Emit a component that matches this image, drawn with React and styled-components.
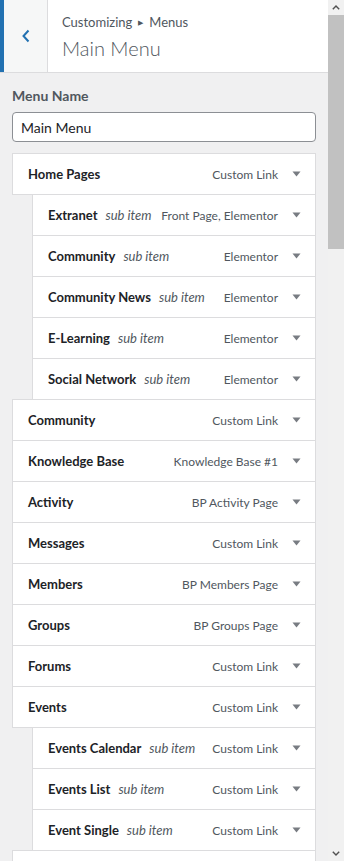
import React from "react";
import styled, { createGlobalStyle } from "styled-components";

const Global = createGlobalStyle`
  html, body { margin: 0; padding: 0; }
  body {
    font-family: Lato, "Noto Sans", "Liberation Sans", sans-serif;
    background: #f0f0f1;
    color: #1d2327;
  }
`;

const Shell = styled.div`
  display: flex;
  width: 344px;
  height: 861px;
  overflow: hidden;
`;

const Panel = styled.div`
  width: 328px;
  flex: none;
  display: flex;
  flex-direction: column;
  background: #f0f0f1;
  overflow: hidden;
`;

const Header = styled.div`
  display: flex;
  height: 72px;
  flex: none;
  background: #fff;
  border-bottom: 1px solid #dcdcde;
`;

const BackButton = styled.div`
  width: 43px;
  flex: none;
  display: flex;
  align-items: center;
  justify-content: center;
  background: #f6f7f7;
  border-left: 4px solid #2271b1;
  border-right: 1px solid #dcdcde;
  color: #2271b1;
`;

const Titles = styled.div`
  display: flex;
  flex-direction: column;
  padding: 12px 0 0 14px;
`;

const Crumb = styled.div`
  font-size: 13px;
  line-height: 20px;
  color: #50575e;
  display: flex;
  align-items: center;
  gap: 6px;
`;

const CrumbArrow = styled.span`
  font-size: 7px;
  color: #50575e;
`;

const Title = styled.div`
  font-size: 20px;
  font-weight: 300;
  line-height: 28px;
  color: #50575e;
  margin-top: 2px;
`;

const Body = styled.div`
  padding: 13px 12px 0 12px;
  display: flex;
  flex-direction: column;
`;

const Label = styled.div`
  font-size: 14px;
  font-weight: 700;
  line-height: 20px;
  color: #50575e;
`;

const NameInput = styled.div`
  margin-top: 6px;
  height: 28px;
  border: 1px solid #8c8f94;
  border-radius: 4px;
  background: #fff;
  display: flex;
  align-items: center;
  padding: 0 8px;
  font-size: 14px;
  color: #1d2327;
`;

const List = styled.div`
  margin-top: 11px;
  display: flex;
  flex-direction: column;
`;

const Item = styled.div`
  margin-left: ${(p) => (p.$depth ? 20 : 0)}px;
  margin-top: -1px;
  height: 40px;
  flex: none;
  background: #fff;
  border: 1px solid #dcdcde;
  display: flex;
  align-items: center;
  padding-left: 15px;
  &:first-child { margin-top: 0; }
`;

const ItemTitle = styled.span`
  font-size: 13px;
  font-weight: 700;
  color: #1d2327;
  white-space: nowrap;
`;

const SubTag = styled.span`
  font-size: 13px;
  font-style: italic;
  color: #50575e;
  margin-left: 8px;
  white-space: nowrap;
`;

const ItemType = styled.span`
  margin-left: auto;
  padding-left: 8px;
  font-size: 12px;
  color: #50575e;
  white-space: nowrap;
`;

const Toggle = styled.span`
  width: 37px;
  flex: none;
  display: flex;
  align-items: center;
  justify-content: center;
  color: #787c82;
`;

const Scrollbar = styled.div`
  width: 16px;
  flex: none;
  display: flex;
  flex-direction: column;
  background: #f1f1f1;
`;

const ScrollButton = styled.div`
  height: 15px;
  flex: none;
  display: flex;
  align-items: center;
  justify-content: center;
  color: #505050;
`;

const Track = styled.div`
  flex: 1;
  display: flex;
  flex-direction: column;
`;

const Thumb = styled.div`
  height: 234px;
  background: #c1c1c1;
`;

const Arrow = () => (
  <svg width="9" height="6" viewBox="0 0 9 6">
    <polygon points="0.5,0.5 8.5,0.5 4.5,5.5" fill="currentColor" />
  </svg>
);

const Chevron = ({ up }) => (
  <svg width="8" height="5" viewBox="0 0 8 5" style={up ? undefined : { transform: "rotate(180deg)" }}>
    <polyline points="0.8,4.2 4,1 7.2,4.2" fill="none" stroke="currentColor" strokeWidth="1.4" />
  </svg>
);

const items = [
  { title: "Home Pages", type: "Custom Link" },
  { title: "Extranet", type: "Front Page, Elementor", sub: true },
  { title: "Community", type: "Elementor", sub: true },
  { title: "Community News", type: "Elementor", sub: true },
  { title: "E-Learning", type: "Elementor", sub: true },
  { title: "Social Network", type: "Elementor", sub: true },
  { title: "Community", type: "Custom Link" },
  { title: "Knowledge Base", type: "Knowledge Base #1" },
  { title: "Activity", type: "BP Activity Page" },
  { title: "Messages", type: "Custom Link" },
  { title: "Members", type: "BP Members Page" },
  { title: "Groups", type: "BP Groups Page" },
  { title: "Forums", type: "Custom Link" },
  { title: "Events", type: "Custom Link" },
  { title: "Events Calendar", type: "Custom Link", sub: true },
  { title: "Events List", type: "Custom Link", sub: true },
  { title: "Event Single", type: "Custom Link", sub: true },
  { title: "Courses", type: "Custom Link" },
];

export default function App() {
  return (
    <Shell>
      <Global />
      <Panel>
        <Header>
          <BackButton>
            <svg width="10" height="14" viewBox="0 0 10 14">
              <polyline points="7.5,1.5 2.5,7 7.5,12.5" fill="none" stroke="currentColor" strokeWidth="2" />
            </svg>
          </BackButton>
          <Titles>
            <Crumb>
              Customizing <CrumbArrow>▶</CrumbArrow> Menus
            </Crumb>
            <Title>Main Menu</Title>
          </Titles>
        </Header>
        <Body>
          <Label>Menu Name</Label>
          <NameInput>Main Menu</NameInput>
          <List>
            {items.map((it, i) => (
              <Item key={i} $depth={it.sub ? 1 : 0}>
                <ItemTitle>{it.title}</ItemTitle>
                {it.sub && <SubTag>sub item</SubTag>}
                <ItemType>{it.type}</ItemType>
                <Toggle>
                  <Arrow />
                </Toggle>
              </Item>
            ))}
          </List>
        </Body>
      </Panel>
      <Scrollbar>
        <ScrollButton>
          <Chevron up />
        </ScrollButton>
        <Track>
          <Thumb />
        </Track>
        <ScrollButton>
          <Chevron />
        </ScrollButton>
      </Scrollbar>
    </Shell>
  );
}
